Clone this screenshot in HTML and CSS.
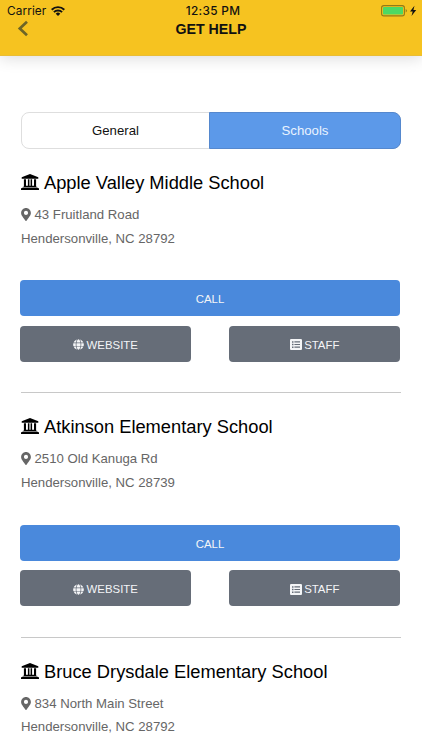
FILE: index.html
```
<!DOCTYPE html>
<html lang="en">
<head>
<meta charset="utf-8">
<title>Get Help</title>
<link rel="stylesheet" href="styles.css">
</head>
<body>
<svg class="defs" aria-hidden="true">
  <symbol id="school" viewBox="0 0 18 16">
    <path d="M9 0 17.3 3.3V4.7H.7V3.3ZM2.2 12.7h13.6c.5 0 .8.3.8.8H1.4c0-.5.3-.8.8-.8ZM.8 14h16.4c.4 0 .8.4.8.8V16H0v-1.2c0-.4.4-.8.8-.8ZM2.900 5.300h2.100v6.500h1.900V5.300h1.500v6.500h1.200V5.300h1.500v6.500h1.900V5.300h2.100v7.600H2.900Z"/>
  </symbol>
  <symbol id="pin" viewBox="0 0 384 512">
    <path d="M172.3 501.7C27 291 0 269.400 0 192 0 86 86 0 192 0s192 86 192 192c0 77.400-27 99-172.300 309.700-9.500 13.800-29.900 13.800-39.400 0ZM192 272c44.200 0 80-35.800 80-80s-35.800-80-80-80-80 35.800-80 80 35.800 80 80 80Z"/>
  </symbol>
  <symbol id="globe" viewBox="0 0 496 512">
    <path d="M336.500 160C322 70.700 287.800 8 248 8s-74 62.700-88.500 152h177zM152 256c0 22.200 1.200 43.500 3.300 64h185.300c2.100-20.500 3.300-41.800 3.300-64s-1.200-43.500-3.300-64H155.300c-2.100 20.500-3.300 41.800-3.300 64zm324.700-96c-28.600-67.900-86.500-120.400-158-141.600 24.400 33.800 41.200 84.700 50 141.600h108zM177.200 18.400C105.800 39.600 47.800 92.100 19.300 160h108c8.700-56.900 25.500-107.800 49.900-141.600zM487.400 192H372.700c2.100 21 3.300 42.500 3.300 64s-1.200 43-3.300 64h114.600c5.500-20.500 8.600-41.800 8.600-64s-3.100-43.500-8.500-64zM120 256c0-21.500 1.200-43 3.300-64H8.600C3.200 212.500 0 233.800 0 256s3.200 43.500 8.600 64h114.600c-2-21-3.200-42.500-3.200-64zm39.500 96c14.500 89.300 48.700 152 88.500 152s74-62.700 88.500-152h-177zm159.300 141.600c71.400-21.200 129.400-73.700 158-141.600h-108c-8.800 56.900-25.600 107.800-50 141.600zM19.300 352c28.600 67.900 86.500 120.400 158 141.600-24.400-33.800-41.200-84.700-50-141.600h-108z"/>
  </symbol>
  <symbol id="list" viewBox="0 0 12 11">
    <path fill-rule="evenodd" d="M1.100 0h9.800Q12 0 12 1.100v8.800q0 1.100-1.100 1.100H1.100Q0 11 0 9.900V1.100Q0 0 1.100 0ZM2 2.200v1.500h1.500V2.200ZM4.400 2.300v1.200H10V2.300ZM2 4.800v1.500h1.500V4.800ZM4.400 4.900v1.200H10V4.900ZM2 7.400v1.500h1.500V7.400ZM4.400 7.500v1.200H10V7.500Z"/>
  </symbol>
</svg>

<header class="header">
  <div class="status">
    <div class="carrier">Carrier
      <svg class="wifi" viewBox="0 0 14 10"><g fill="none" stroke="#111" stroke-width="1.900"><path d="M.7 3.700a9 9 0 0 1 12.600 0"/><path d="M2.900 6.200a5.800 5.800 0 0 1 8.200 0"/></g><path d="M4.700 7.700a3.300 3.300 0 0 1 4.600 0L7 10Z"/></svg>
    </div>
    <div class="time">12:35 PM</div>
    <svg class="battery" viewBox="0 0 36 12"><rect x=".6" y=".6" width="22.800" height="10.300" rx="2.200" fill="none" stroke="#927b18" stroke-width="1.100"/><rect x="2" y="2" width="20" height="7.500" rx=".8" fill="#4cd964"/><path d="M24.700 4v3.500q1.200-.4 1.200-1.750T24.700 4Z" fill="#927b18"/><path d="M33.500.8 29 6.500h2.700l-1.200 4.600L35.200 5h-2.800Z"/></svg>
  </div>
  <div class="titlebar">
    <svg class="back" viewBox="0 0 12 17"><path d="M10 1.800 2.800 8.500l7.200 6.700" fill="none" stroke="#6d6527" stroke-width="2.700"/></svg>
    <h1 class="page-title">GET HELP</h1>
  </div>
</header>

<main class="content">
  <nav class="tabs"><div class="tab">General</div><div class="tab active">Schools</div></nav>

  <section class="school">
    <h2 class="name"><svg class="i-school"><use href="#school"/></svg>Apple Valley Middle School</h2>
    <p class="address"><svg class="i-pin"><use href="#pin"/></svg>43 Fruitland Road<br>Hendersonville, NC 28792</p>
    <div class="btn call">CALL</div>
    <div class="row">
      <div class="btn"><svg class="i-globe"><use href="#globe"/></svg>WEBSITE</div>
      <div class="btn"><svg class="i-list"><use href="#list"/></svg>STAFF</div>
    </div>
  </section>

  <section class="school">
    <h2 class="name"><svg class="i-school"><use href="#school"/></svg>Atkinson Elementary School</h2>
    <p class="address"><svg class="i-pin"><use href="#pin"/></svg>2510 Old Kanuga Rd<br>Hendersonville, NC 28739</p>
    <div class="btn call">CALL</div>
    <div class="row">
      <div class="btn"><svg class="i-globe"><use href="#globe"/></svg>WEBSITE</div>
      <div class="btn"><svg class="i-list"><use href="#list"/></svg>STAFF</div>
    </div>
  </section>

  <section class="school last">
    <h2 class="name"><svg class="i-school"><use href="#school"/></svg>Bruce Drysdale Elementary School</h2>
    <p class="address"><svg class="i-pin"><use href="#pin"/></svg>834 North Main Street<br>Hendersonville, NC 28792</p>
  </section>
</main>
</body>
</html>
```
FILE: styles.css
```
* { box-sizing: border-box; }
body {
  margin: 0;
  background: #fff;
  color: #111;
  font-family: "Liberation Sans", Arial, sans-serif;
}
.defs { position: absolute; width: 0; height: 0; }
.header {
  height: 56px;
  background: #f6c320;
  border-bottom: 1px solid #e9bd35;
  box-shadow: 0 3px 14px rgba(0, 0, 0, .13);
}
.status {
  display: grid;
  grid-template-columns: 1fr auto 1fr;
  align-items: center;
  height: 21px;
  padding: 1px 5px 0 7px;
  font: 500 11.800px/20px Inter, sans-serif;
}
.carrier { display: flex; align-items: center; gap: 5px; font-weight: 400; letter-spacing: .1px; }
.wifi { width: 14px; height: 10px; }
.time { padding-left: 2px; letter-spacing: .35px; }
.battery { width: 36px; height: 12px; justify-self: end; }
.titlebar {
  display: grid;
  grid-template: 14px / 12px 1fr 12px;
  align-items: center;
  padding: 0 17px;
}
.back { width: 12px; height: 17px; }
.page-title { margin: 0; text-align: center; font-size: 14.200px; line-height: 14px; padding-top: 1px; }
.content { padding: 56px 21px 0; }
.tabs {
  display: flex;
  height: 37px;
  border: 1px solid #dedede;
  border-radius: 8px;
  font-size: 13.200px;
  line-height: 36px;
  text-align: center;
}
.tab { flex: 0 0 187px; }
.tab.active {
  flex: 1;
  margin: -1px -1px -1px 0;
  border: 1px solid #5588ce;
  border-radius: 0 8px 8px 0;
  background: #5c99e9;
  color: #eaf3ff;
}
.school { height: 243.400px; padding-top: 22px; }
.school + .school { height: 244.400px; border-top: 1px solid #c8c8c8; }
.school.last { height: auto; }
.name {
  display: flex;
  align-items: center;
  gap: 5px;
  margin: 0;
  height: 24px;
  font-size: 18.300px;
  font-weight: 400;
  line-height: 24px;
  white-space: nowrap;
  color: #000;
}
svg { fill: currentColor; }
.i-school { width: 18px; height: 16px; margin-bottom: 2px; }
.address { margin: 8px 0 30.200px; color: #666; font-size: 13.200px; line-height: 23.500px; }
.last .address { margin-bottom: 0; }
.i-pin { width: 10px; height: 13px; margin-right: 3.500px; vertical-align: -2px; }
.btn {
  display: flex;
  align-items: center;
  justify-content: center;
  gap: 2.500px;
  height: 36px;
  padding-top: 2px;
  border-radius: 4px;
  background: #666d78;
  color: #f4f5f7;
  font-size: 11.400px;
}
.btn.call { margin: 0 1px 9.800px -1px; background: #4a89dc; }
.row { display: grid; grid-template-columns: 171px 171px; justify-content: space-between; margin: 0 1px 0 -1px; }
.i-globe { width: 11px; height: 11px; }
.i-list { width: 12px; height: 11px; }
```
